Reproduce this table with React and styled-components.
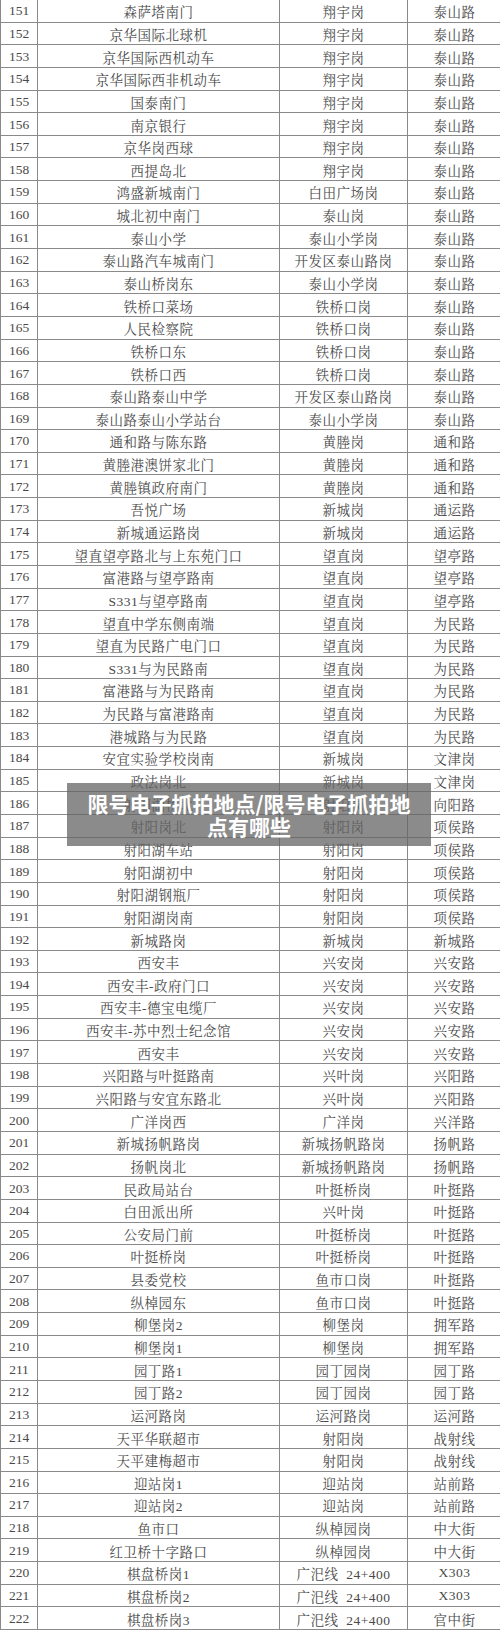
import React from "react";
import styled, { createGlobalStyle } from "styled-components";

const GlobalStyle = createGlobalStyle`
  html, body {
    margin: 0;
    padding: 0;
    background: #fff;
  }
`;

const rows = [
  ["森萨塔南门", "翔宇岗", "泰山路"],
  ["京华国际北球机", "翔宇岗", "泰山路"],
  ["京华国际西机动车", "翔宇岗", "泰山路"],
  ["京华国际西非机动车", "翔宇岗", "泰山路"],
  ["国泰南门", "翔宇岗", "泰山路"],
  ["南京银行", "翔宇岗", "泰山路"],
  ["京华岗西球", "翔宇岗", "泰山路"],
  ["西提岛北", "翔宇岗", "泰山路"],
  ["鸿盛新城南门", "白田广场岗", "泰山路"],
  ["城北初中南门", "泰山岗", "泰山路"],
  ["泰山小学", "泰山小学岗", "泰山路"],
  ["泰山路汽车城南门", "开发区泰山路岗", "泰山路"],
  ["泰山桥岗东", "泰山小学岗", "泰山路"],
  ["铁桥口菜场", "铁桥口岗", "泰山路"],
  ["人民检察院", "铁桥口岗", "泰山路"],
  ["铁桥口东", "铁桥口岗", "泰山路"],
  ["铁桥口西", "铁桥口岗", "泰山路"],
  ["泰山路泰山中学", "开发区泰山路岗", "泰山路"],
  ["泰山路泰山小学站台", "泰山小学岗", "泰山路"],
  ["通和路与陈东路", "黄塍岗", "通和路"],
  ["黄塍港澳饼家北门", "黄塍岗", "通和路"],
  ["黄塍镇政府南门", "黄塍岗", "通和路"],
  ["吾悦广场", "新城岗", "通运路"],
  ["新城通运路岗", "新城岗", "通运路"],
  ["望直望亭路北与上东苑门口", "望直岗", "望亭路"],
  ["富港路与望亭路南", "望直岗", "望亭路"],
  ["S331与望亭路南", "望直岗", "望亭路"],
  ["望直中学东侧南端", "望直岗", "为民路"],
  ["望直为民路广电门口", "望直岗", "为民路"],
  ["S331与为民路南", "望直岗", "为民路"],
  ["富港路与为民路南", "望直岗", "为民路"],
  ["为民路与富港路南", "望直岗", "为民路"],
  ["港城路与为民路", "望直岗", "为民路"],
  ["安宜实验学校岗南", "新城岗", "文津岗"],
  ["政法岗北", "新城岗", "文津岗"],
  ["射阳湖桥北", "射阳岗", "向阳路"],
  ["射阳岗北", "射阳岗", "项侯路"],
  ["射阳湖车站", "射阳岗", "项侯路"],
  ["射阳湖初中", "射阳岗", "项侯路"],
  ["射阳湖钢瓶厂", "射阳岗", "项侯路"],
  ["射阳湖岗南", "射阳岗", "项侯路"],
  ["新城路岗", "新城岗", "新城路"],
  ["西安丰", "兴安岗", "兴安路"],
  ["西安丰-政府门口", "兴安岗", "兴安路"],
  ["西安丰-德宝电缆厂", "兴安岗", "兴安路"],
  ["西安丰-苏中烈士纪念馆", "兴安岗", "兴安路"],
  ["西安丰", "兴安岗", "兴安路"],
  ["兴阳路与叶挺路南", "兴叶岗", "兴阳路"],
  ["兴阳路与安宜东路北", "兴叶岗", "兴阳路"],
  ["广洋岗西", "广洋岗", "兴洋路"],
  ["新城扬帆路岗", "新城扬帆路岗", "扬帆路"],
  ["扬帆岗北", "新城扬帆路岗", "扬帆路"],
  ["民政局站台", "叶挺桥岗", "叶挺路"],
  ["白田派出所", "兴叶岗", "叶挺路"],
  ["公安局门前", "叶挺桥岗", "叶挺路"],
  ["叶挺桥岗", "叶挺桥岗", "叶挺路"],
  ["县委党校", "鱼市口岗", "叶挺路"],
  ["纵棹园东", "鱼市口岗", "叶挺路"],
  ["柳堡岗2", "柳堡岗", "拥军路"],
  ["柳堡岗1", "柳堡岗", "拥军路"],
  ["园丁路1", "园丁园岗", "园丁路"],
  ["园丁路2", "园丁园岗", "园丁路"],
  ["运河路岗", "运河路岗", "运河路"],
  ["天平华联超市", "射阳岗", "战射线"],
  ["天平建梅超市", "射阳岗", "战射线"],
  ["迎站岗1", "迎站岗", "站前路"],
  ["迎站岗2", "迎站岗", "站前路"],
  ["鱼市口", "纵棹园岗", "中大街"],
  ["红卫桥十字路口", "纵棹园岗", "中大街"],
  ["棋盘桥岗1", "广汜线  24+400", "X303"],
  ["棋盘桥岗2", "广汜线  24+400", "X303"],
  ["棋盘桥岗3", "广汜线  24+400", "官中街"],
];

const Page = styled.div`
  position: relative;
  width: 500px;
  height: 1630px;
  overflow: hidden;
  background: #fff;
`;

const Table = styled.div`
  display: grid;
  grid-template-columns: 37px 242px 128px 93px;
  grid-template-rows: repeat(${rows.length}, 1fr);
  height: 1630px;
  width: 500px;
  border-left: 1px solid #8a8a8a;
  box-sizing: border-box;
  font-family: "Liberation Serif", "Noto Serif CJK SC", "Noto Sans CJK SC", serif;
  font-size: 13.5px;
  color: #4a4a4a;
`;

const Cell = styled.div`
  display: flex;
  align-items: center;
  justify-content: center;
  white-space: pre;
  border-bottom: 1px solid #8a8a8a;
  border-right: ${(p) => (p.$last ? "none" : "1px solid #8a8a8a")};
  letter-spacing: ${(p) => (p.$num ? "0" : "0.5px")};
  padding-top: 1px;
  box-sizing: border-box;
`;

const Banner = styled.div`
  position: absolute;
  left: 67px;
  top: 783px;
  width: 364px;
  height: 63px;
  background: rgba(100, 100, 100, 0.75);
  display: flex;
  align-items: center;
  justify-content: center;
  text-align: center;
  color: #fff;
  font-family: "Noto Sans CJK SC", "Noto Sans", sans-serif;
  font-weight: 700;
  font-size: 21px;
  line-height: 23px;
  padding: 0 12px;
  box-sizing: border-box;
`;

export default function App() {
  return (
    <Page>
      <GlobalStyle />
      <Table>
        {rows.map(([place, post, road], i) => (
          <React.Fragment key={i}>
            <Cell $num>{151 + i}</Cell>
            <Cell>{place}</Cell>
            <Cell>{post}</Cell>
            <Cell $last>{road}</Cell>
          </React.Fragment>
        ))}
      </Table>
      <Banner>限号电子抓拍地点/限号电子抓拍地点有哪些</Banner>
    </Page>
  );
}
